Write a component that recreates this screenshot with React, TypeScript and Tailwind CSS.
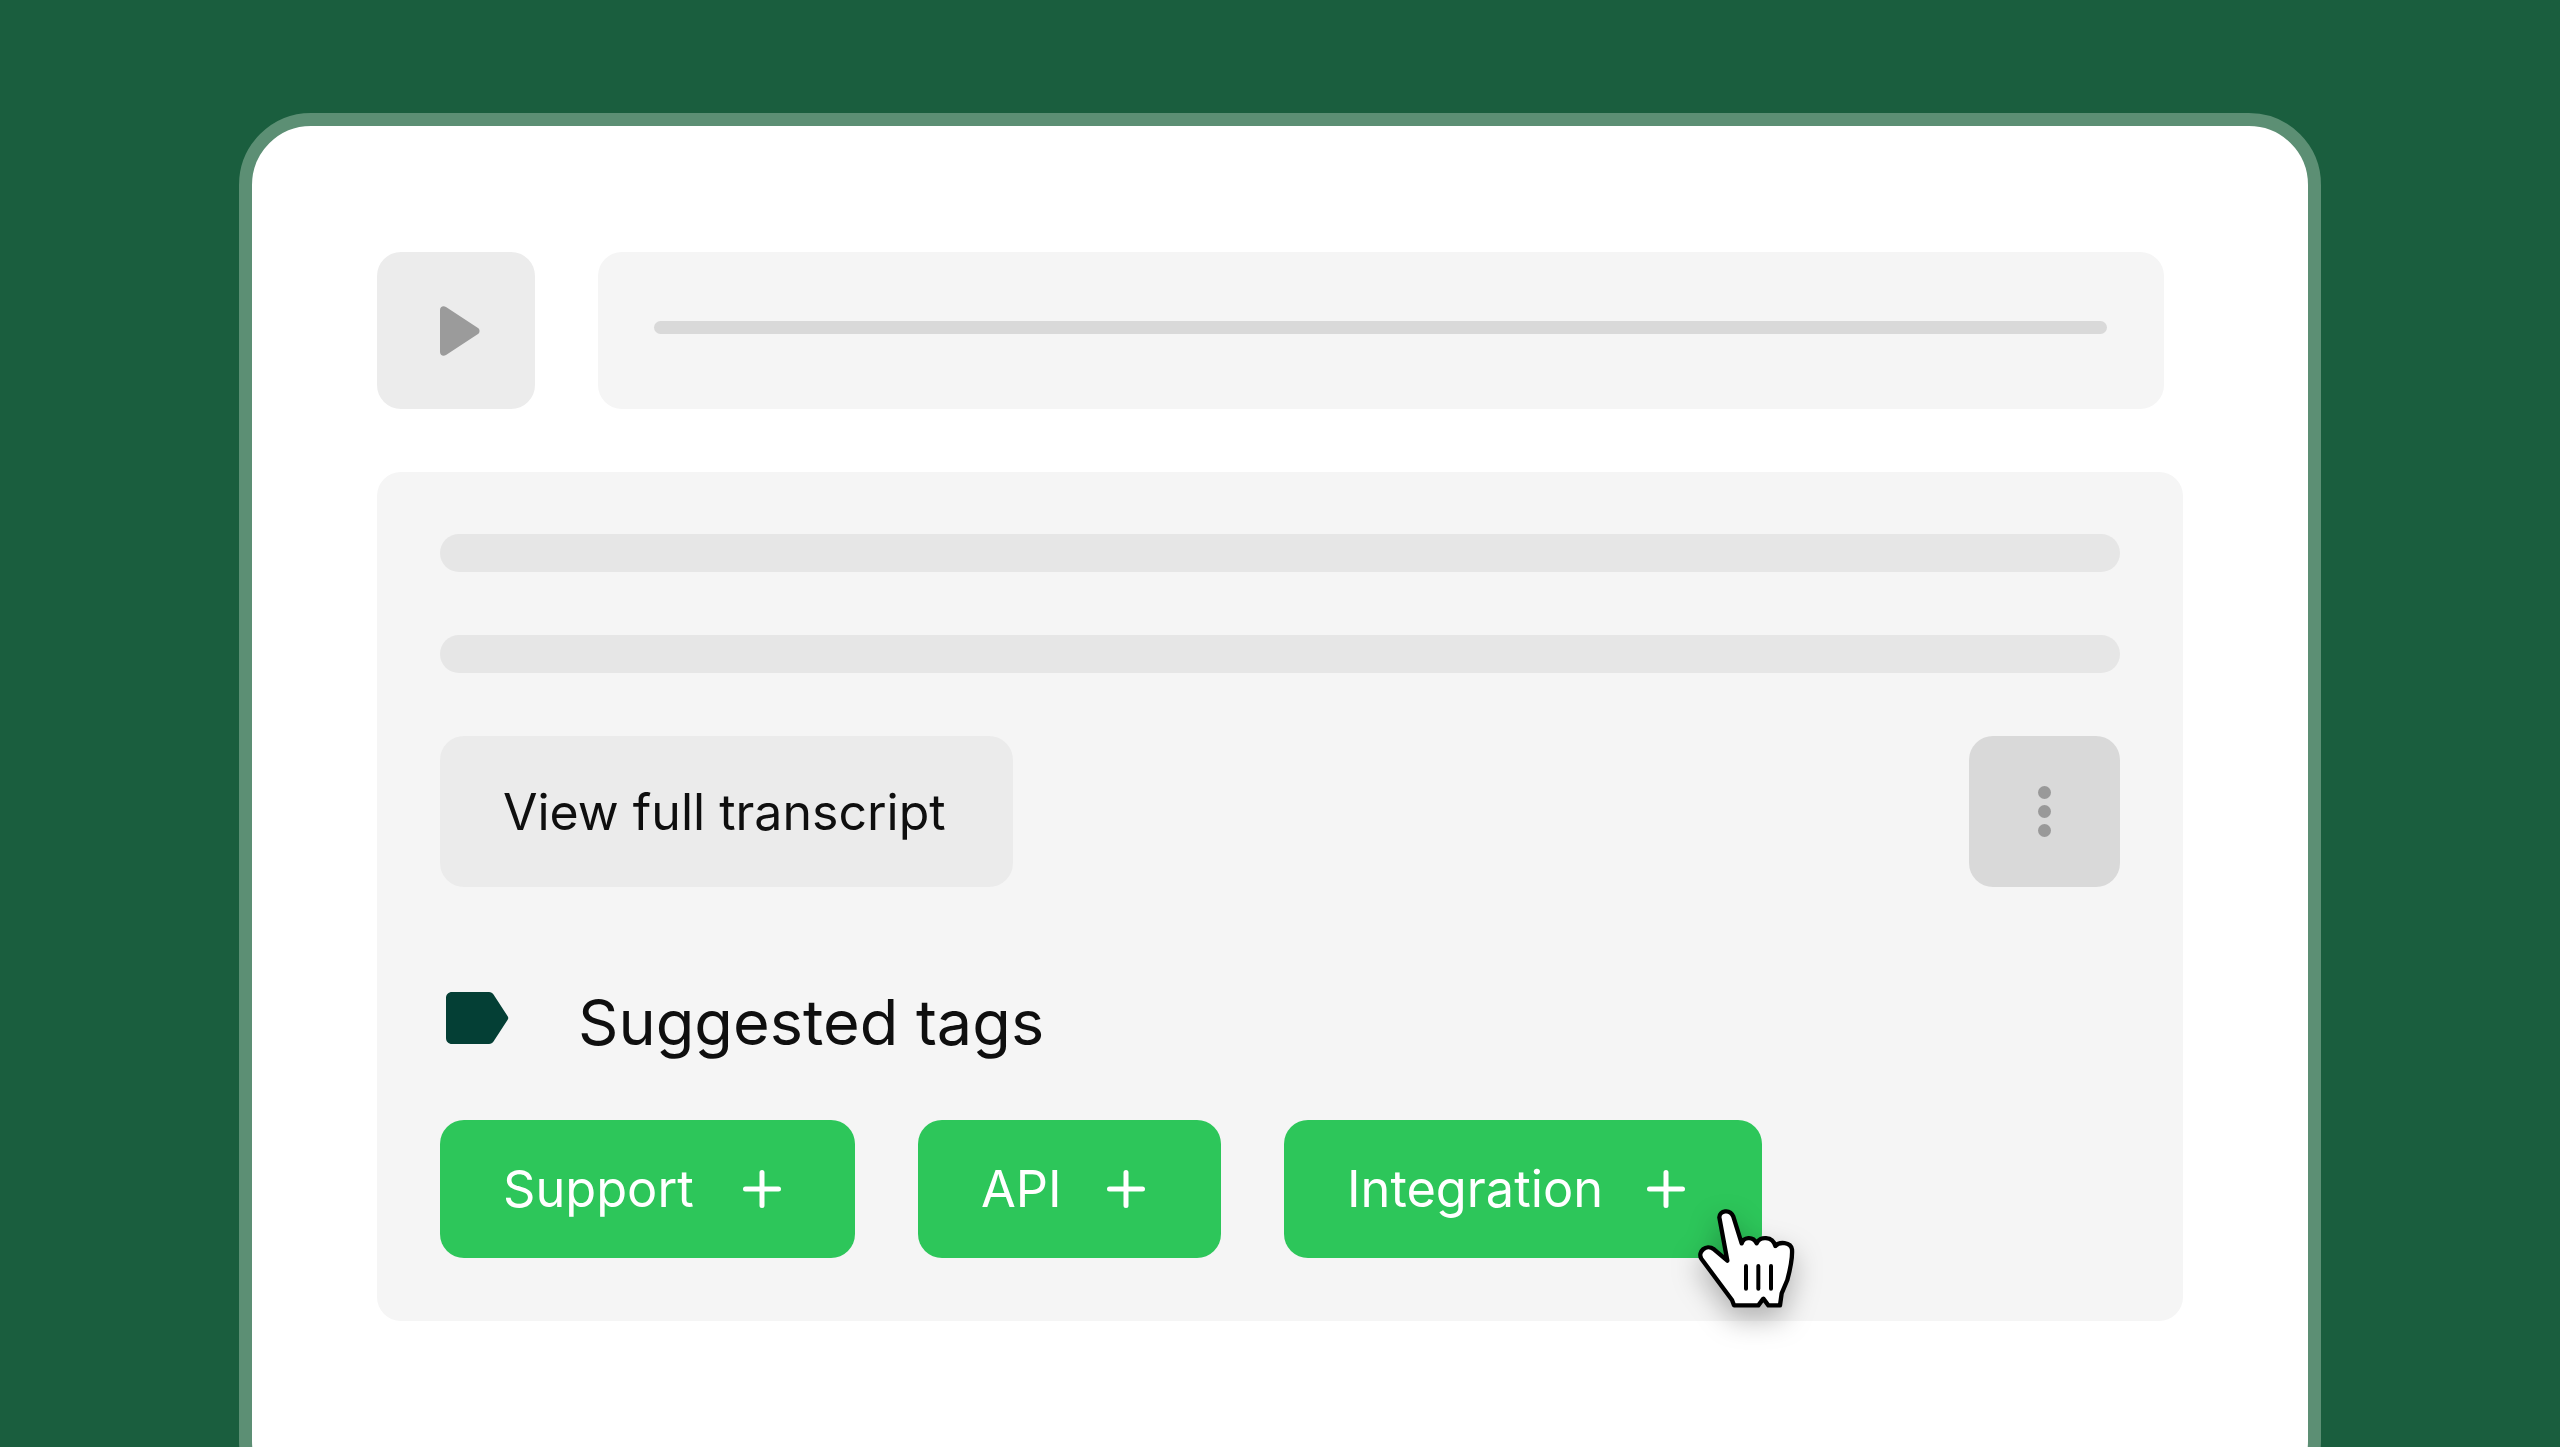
function Plus() {
  return (
    <svg className="w-[38px] h-[38px] shrink-0" viewBox="0 0 38 38" fill="none" stroke="#ffffff" strokeWidth="5" strokeLinecap="round">
      <path d="M19 2.500v33M2.500 19h33" />
    </svg>
  );
}

function Chip({ label, width, gap }: { label: string; width: string; gap: string }) {
  return (
    <div className={`h-[138px] rounded-[24px] bg-[#2dc65a] flex items-center pl-[63px] text-white text-[50.5px] leading-none ${gap} ${width}`}>
      <span>{label}</span>
      <Plus />
    </div>
  );
}

function Cursor() {
  return (
    <svg
      className="absolute left-[1263px] top-[688px] w-[200px] h-[170px] drop-shadow-[0_12px_14px_rgba(0,0,0,0.28)]"
      viewBox="0 0 600 510"
    >
      <path
        d="M238 172C238 152 270 145 280 170L305 250C310 232 338 226 350 250C358 228 398 228 406 258C418 244 452 246 456 268C458 295 450 330 442 360L425 400L420 436H385L370 416L355 436H282L276 420L184 296C172 276 198 250 222 268L262 302Z"
        fill="#ffffff"
        stroke="#000000"
        strokeWidth="13"
        strokeLinejoin="round"
      />
      <path d="M318 318v68M355 318v68M393 318v68" stroke="#000000" strokeWidth="12" strokeLinecap="round" fill="none" />
    </svg>
  );
}

export default function App() {
  return (
    <div className="h-[1447px] w-full overflow-hidden bg-[#1a5e3e] pt-[113px] pl-[239px] font-['Inter',sans-serif]">
      <div className="w-[2082px] h-[1400px] rounded-[72px] border-[13px] border-[#5c8f74] bg-white pt-[126px] px-[125px] box-border">
        <div className="flex gap-[63px]">
          <div className="w-[158px] h-[157px] rounded-[24px] bg-[#ececec] flex items-center justify-center">
            <svg className="w-[40px] h-[50px] ml-[8px]" viewBox="0 0 40 50">
              <path d="M0 4L0 46C0 49 3 51 6 49L38 28C40 27 40 23 38 22L6 1C3 -1 0 1 0 4Z" fill="#9b9b9b" />
            </svg>
          </div>
          <div className="w-[1566px] h-[157px] rounded-[24px] bg-[#f5f5f5] flex items-center pl-[56px] pr-[57px] pb-[6px]">
            <div className="w-full h-[13px] rounded-full bg-[#d9d9d9]" />
          </div>
        </div>

        <div className="relative mt-[63px] w-[1806px] h-[849px] rounded-[24px] bg-[#f5f5f5] px-[63px] pt-[62px]">
          <div className="h-[38px] rounded-full bg-[#e6e6e6]" />
          <div className="h-[38px] rounded-full bg-[#e6e6e6] mt-[63px]" />

          <div className="flex justify-between mt-[63px]">
            <div className="w-[573px] h-[151px] rounded-[24px] bg-[#ebebeb] flex items-center pl-[63px] text-[50px] leading-none text-[#0f0f0f]">
              View full transcript
            </div>
            <div className="w-[151px] h-[151px] rounded-[24px] bg-[#d9d9d9] flex flex-col items-center justify-center gap-[6px]">
              <span className="w-[13px] h-[13px] rounded-full bg-[#999999]" />
              <span className="w-[13px] h-[13px] rounded-full bg-[#999999]" />
              <span className="w-[13px] h-[13px] rounded-full bg-[#999999]" />
            </div>
          </div>

          <div className="flex items-center mt-[104px] h-[62px]">
            <svg className="w-[63px] h-[52px] ml-[6px] mb-[8px] shrink-0" viewBox="0 0 63 52">
              <path d="M6 0H43C45 0 46.500 1 47.500 2.500L61.500 24C62.500 25.500 62.500 26.500 61.500 28L47.500 49.500C46.500 51 45 52 43 52H6C2.500 52 0 49.500 0 46V6C0 2.500 2.500 0 6 0Z" fill="#043f35" />
            </svg>
            <span className="ml-[69px] text-[63px] leading-none text-[#0f0f0f]">Suggested tags</span>
          </div>

          <div className="flex gap-[63px] mt-[67px]">
            <Chip label="Support" width="w-[415px]" gap="gap-[49px]" />
            <Chip label="API" width="w-[303px]" gap="gap-[45px]" />
            <Chip label="Integration" width="w-[478px]" gap="gap-[44px]" />
          </div>
          <Cursor />
        </div>
      </div>
    </div>
  );
}
